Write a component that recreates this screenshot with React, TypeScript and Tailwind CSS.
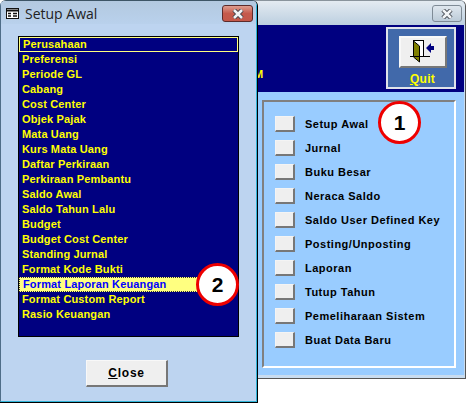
const setupItems = [
  'Perusahaan',
  'Preferensi',
  'Periode GL',
  'Cabang',
  'Cost Center',
  'Objek Pajak',
  'Mata Uang',
  'Kurs Mata Uang',
  'Daftar Perkiraan',
  'Perkiraan Pembantu',
  'Saldo Awal',
  'Saldo Tahun Lalu',
  'Budget',
  'Budget Cost Center',
  'Standing Jurnal',
  'Format Kode Bukti',
  'Format Laporan Keuangan',
  'Format Custom Report',
  'Rasio Keuangan',
];

const menuItems = [
  'Setup Awal',
  'Jurnal',
  'Buku Besar',
  'Neraca Saldo',
  'Saldo User Defined Key',
  'Posting/Unposting',
  'Laporan',
  'Tutup Tahun',
  'Pemeliharaan Sistem',
  'Buat Data Baru',
];

function CloseGlyph() {
  return (
    <svg width="14" height="10" viewBox="0 0 14 10">
      <path d="M3 1 L11 9 M11 1 L3 9" stroke="#3a3f48" strokeWidth="4.4" />
      <path d="M3 1 L11 9 M11 1 L3 9" stroke="#f2f4f6" strokeWidth="2.6" />
    </svg>
  );
}

function DoorIcon() {
  return (
    <svg width="26" height="24" viewBox="0 0 26 24">
      <rect x="3.5" y="0.5" width="10" height="16" fill="#fff" stroke="#000" />
      <path d="M3.5 1 L9.5 6 V22 L3.5 17 Z" fill="#808000" stroke="#000" />
      <path d="M0 16.5 H20" stroke="#000" />
      <path d="M16 8 L21 3 V6 H24 V10 H21 V13 Z" fill="#000080" />
    </svg>
  );
}

function WindowIcon() {
  return (
    <svg width="13" height="11" viewBox="0 0 13 11" className="mt-[1px]">
      <rect x="0.5" y="0.5" width="12" height="10" fill="#fff" stroke="#111" />
      <path d="M0 2.5 H13" stroke="#111" strokeWidth="2" />
      <path d="M2 5.5 H5 M2 8 H5 M7 5.5 H11 M7 8 H11" stroke="#111" strokeWidth="1.4" />
    </svg>
  );
}

function Callout({ label }: { label: string }) {
  return (
    <div className="w-[43px] h-[43px] rounded-full bg-white border-[3px] border-[#ee0000] flex items-center justify-center text-[21px] font-bold text-black">
      {label}
    </div>
  );
}

export default function App() {
  return (
    <div className="relative w-[467px] h-[403px] bg-white overflow-hidden font-['Liberation_Sans',sans-serif]">
      {/* main window behind */}
      <div className="absolute left-[200px] top-0 w-[266px] h-[379px] flex flex-col border border-[#555] border-t-[#8a949c] rounded-t-md bg-[#c9dcef] overflow-hidden">
        <div className="h-[24px] shrink-0 flex justify-end items-start pr-[3px] pt-[4px] bg-gradient-to-b from-[#e4ebf1] to-[#bccfe0]">
          <div className="w-[30px] h-[17px] flex items-center justify-center rounded-[3px] border border-[#7f8b96] bg-gradient-to-b from-[#dfe7ee] to-[#bccbd8]">
            <CloseGlyph />
          </div>
        </div>
        <div className="mr-[1px] mb-[3px] flex-1 flex flex-col">
          <div className="h-[67px] shrink-0 bg-[#000080] flex justify-between items-start pl-[53px] pr-[8px] pt-[2px]">
            <span className="text-[11px] font-bold text-[#ffff00] mt-[39px]">M</span>
            <div className="w-[70px] h-[62px] border-2 border-[#dfe3ea] bg-[#4169aa] flex flex-col items-center pt-[7px] pl-[3px]">
              <div className="w-[48px] h-[32px] shrink-0 bg-[#efefef] border-2 border-[#f8f8f8] border-r-[#777] border-b-[#777] flex items-center justify-center">
                <DoorIcon />
              </div>
              <span className="mt-[2px] text-[12px] leading-[18px] font-bold tracking-[0.3px] text-[#ffff00]">
                <u>Q</u>uit
              </span>
            </div>
          </div>
          <div className="relative flex-1 bg-[#99ccff] pl-[61px] pr-[8px] pt-[8px] pb-[7px]">
            <div className="h-full border-2 border-[#808080] border-r-white border-b-white pl-[11px] pt-[14px] flex flex-col gap-[8px]">
              {menuItems.map((item) => (
                <div key={item} className="flex items-center h-[16px] gap-[10px]">
                  <div className="w-[20px] h-[16px] bg-[#efefef] border border-[#f4f4f4] border-r-2 border-b-2 border-r-[#777] border-b-[#777]" />
                  <span className="text-[11px] font-bold tracking-[0.5px] text-black">{item}</span>
                </div>
              ))}
            </div>
            <div className="absolute left-[177px] top-[9px]">
              <Callout label="1" />
            </div>
          </div>
        </div>
      </div>

      {/* Setup Awal dialog */}
      <div className="absolute left-0 top-0 w-[258px] h-[403px] flex flex-col border-r border-b border-t border-black border-t-[#3d5566] rounded-t-md overflow-hidden">
        <div className="flex-1 flex flex-col border border-t-0 border-[#2fb4d8] border-l-[#4f6d88] bg-[#bdd4f0]">
          <div className="h-[23px] shrink-0 flex items-start pl-[5px] pr-[3px] pt-[6px] bg-gradient-to-b from-[#b3c9e0] to-[#b9d1ec]">
            <WindowIcon />
            <span className="ml-[6px] -mt-[2px] text-[14px] leading-[18px] text-[#222] font-['Open_Sans',sans-serif]">Setup Awal</span>
            <div className="ml-auto -mt-[2px] w-[31px] h-[17px] flex items-center justify-center rounded-[3px] border border-[#5c2b2b] bg-gradient-to-b from-[#dd9d90] via-[#c55a4c] to-[#c4584a]">
              <CloseGlyph />
            </div>
          </div>
          <div className="mx-[17px] mt-[12px] relative h-[301px] bg-[#000080] border border-black">
            {setupItems.map((item, i) => {
              const isFirst = i === 0;
              const isHot = item === 'Format Laporan Keuangan';
              return (
                <div
                  key={item}
                  className={`h-[15px] pl-[3px] flex items-center text-[11px] font-bold tracking-[0.15px] ${
                    isHot
                      ? 'bg-[#ffff80] text-[#0000ff] border border-dotted border-[#333]'
                      : 'text-[#ffff00]'
                  } ${isFirst ? 'border border-[#ffff80]' : ''}`}
                >
                  {item}
                </div>
              );
            })}
            <div className="absolute left-[177px] top-[226px]">
              <Callout label="2" />
            </div>
          </div>
          <div className="flex justify-center mt-[23px] pr-[3px]">
            <button className="w-[82px] h-[27px] bg-[#efefef] border border-[#f8f8f8] border-r-2 border-b-2 border-r-[#777] border-b-[#777] text-[12px] font-bold tracking-[0.8px] text-black">
              <u>C</u>lose
            </button>
          </div>
        </div>
      </div>
    </div>
  );
}
